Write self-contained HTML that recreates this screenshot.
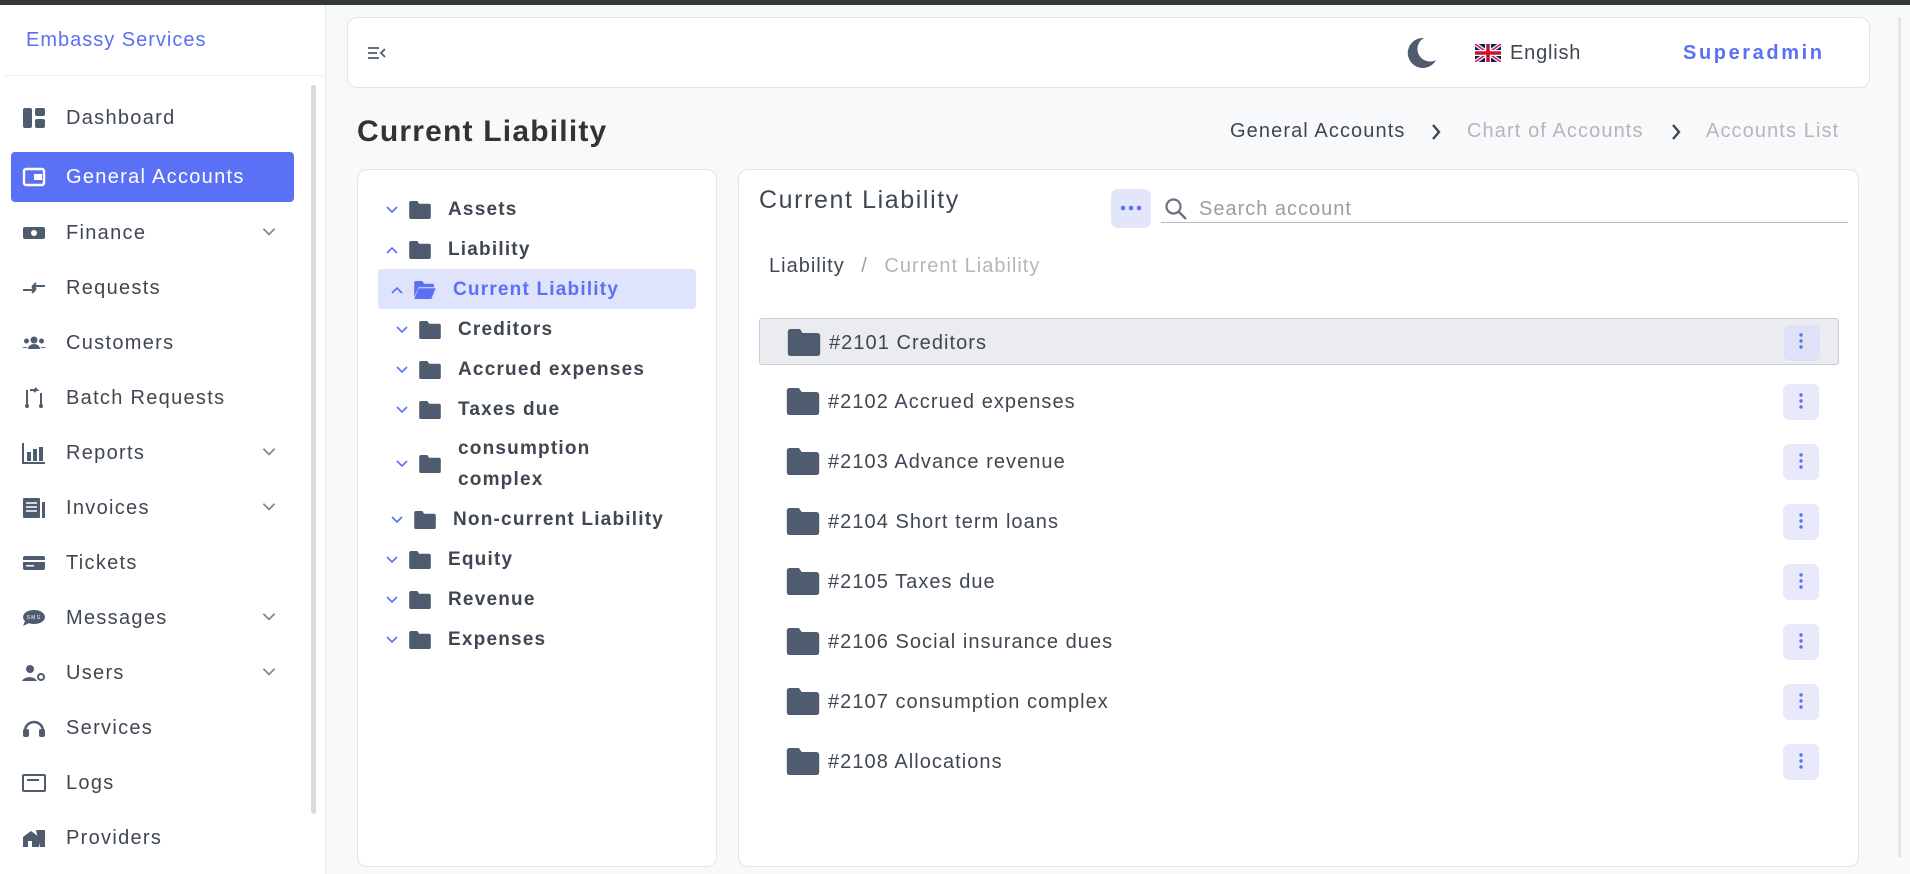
<!DOCTYPE html>
<html><head><meta charset="utf-8"><style>
*{margin:0;padding:0;box-sizing:border-box}
body{width:1910px;height:874px;overflow:hidden;background:#f8f9fb;font-family:"Liberation Sans",sans-serif;color:#3f4752;position:relative}
.a{position:absolute}
.topbar{left:0;top:0;width:1910px;height:5px;background:#333a33}
.side{left:0;top:5px;width:326px;height:869px;background:#fff;border-right:1px solid #e6e8ec}
.mi{position:absolute;left:0;width:300px;height:50px;display:flex;align-items:center;font-size:20px;color:#3f4752;letter-spacing:1.3px}
.mi .ic{position:absolute;left:22px;top:50%;transform:translateY(-50%);width:24px;height:22px}
.mi .t{position:absolute;left:66px}
.mi .ch{position:absolute;left:262px;top:50%;transform:translateY(-60%)}
.card{background:#fff;border:1px solid #e2e4e8;border-radius:10px}
.tr{position:absolute;display:flex;align-items:center;font-size:19px;font-weight:bold;color:#3f4752;height:36px;letter-spacing:1.2px}
.row{position:absolute;left:759px;width:1080px;height:47px}
.row .f{position:absolute;left:27px;top:10px}
.row .t{position:absolute;left:69px;top:13px;font-size:20px;color:#3f4752;letter-spacing:1.05px}
.row .k{position:absolute;left:1024px;top:6px;width:36px;height:36px;background:#e8eafc;border-radius:6px}
</style></head><body>
<div class="a topbar"></div>
<div class="a side">
 <div class="a" style="left:26px;top:24px;font-size:20px;color:#5b6ef5;letter-spacing:1px">Embassy Services</div>
 <div class="a" style="left:4px;top:70px;width:320px;height:1px;background:#eceef1"></div>
 <div class="a" style="left:311px;top:80px;width:5px;height:729px;background:#d6dbdc;border-radius:3px"></div>
</div>
<svg width="0" height="0" style="position:absolute"><defs>
<symbol id="fold" viewBox="0 0 24 20"><path d="M0 2a2 2 0 0 1 2-2h7l2 3h11a2 2 0 0 1 2 2v13a2 2 0 0 1-2 2H2a2 2 0 0 1-2-2z" fill="#4f5b6e"/></symbol>
<symbol id="chd" viewBox="0 0 12 8"><path d="M1 1l5 5 5-5" stroke="currentColor" stroke-width="1.6" fill="none"/></symbol>
</defs></svg>
<!-- menu -->
<div class="mi" style="top:93px"><svg class="ic" viewBox="0 0 24 22"><rect x="1" y="1" width="9" height="20" rx="2" fill="#4f5b6e"/><rect x="13" y="1" width="10" height="8" rx="2" fill="#4f5b6e"/><rect x="13" y="12" width="10" height="9" rx="2" fill="#4f5b6e"/></svg><span class="t">Dashboard</span></div>
<div class="a" style="left:11px;top:152px;width:283px;height:50px;background:#5a71f5;border-radius:4px"></div>
<div class="mi" style="top:152px;color:#fff"><svg class="ic" viewBox="0 0 24 22"><rect x="2" y="3" width="20" height="16" rx="2" stroke="#fff" stroke-width="2.4" fill="none"/><rect x="12" y="8" width="8" height="6" fill="#fff"/></svg><span class="t">General Accounts</span></div>
<div class="mi" style="top:208px"><svg class="ic" viewBox="0 0 24 22"><rect x="1" y="5" width="22" height="12" rx="2" fill="#4f5b6e"/><circle cx="12" cy="11" r="3" fill="#fff"/></svg><span class="t">Finance</span><svg class="ch" width="14" height="9" style="color:#888"><use href="#chd"/></svg></div>
<div class="mi" style="top:263px"><svg class="ic" viewBox="0 0 24 22"><path d="M1 13h12M10 10l3 3-3 3M23 9H11M14 6l-3 3 3 3" stroke="#4f5b6e" stroke-width="2" fill="none"/></svg><span class="t">Requests</span></div>
<div class="mi" style="top:318px"><svg class="ic" viewBox="0 0 24 22"><circle cx="12" cy="8" r="3.5" fill="#4f5b6e"/><circle cx="4.5" cy="9" r="2.5" fill="#4f5b6e"/><circle cx="19.5" cy="9" r="2.5" fill="#4f5b6e"/><path d="M6 17a6 5 0 0 1 12 0z M0 16a4 3 0 0 1 6 0z M18 16a4 3 0 0 1 6 0z" fill="#4f5b6e"/></svg><span class="t">Customers</span></div>
<div class="mi" style="top:373px"><svg class="ic" viewBox="0 0 24 22"><path d="M5 3v16M19 6v13M8 3h7l-2-2M14 3l-2 2" stroke="#4f5b6e" stroke-width="2" fill="none"/><circle cx="5" cy="19" r="2" fill="#4f5b6e"/><circle cx="19" cy="19" r="2" fill="#4f5b6e"/></svg><span class="t">Batch Requests</span></div>
<div class="mi" style="top:428px"><svg class="ic" viewBox="0 0 24 22"><path d="M1 1v20h22" stroke="#4f5b6e" stroke-width="2" fill="none"/><rect x="5" y="10" width="4" height="9" fill="#4f5b6e"/><rect x="11" y="7" width="4" height="12" fill="#4f5b6e"/><rect x="17" y="5" width="4" height="14" fill="#4f5b6e"/></svg><span class="t">Reports</span><svg class="ch" width="14" height="9" style="color:#888"><use href="#chd"/></svg></div>
<div class="mi" style="top:483px"><svg class="ic" viewBox="0 0 24 22"><rect x="1" y="1" width="17" height="20" rx="1" fill="#4f5b6e"/><rect x="20" y="5" width="3" height="16" fill="#4f5b6e"/><path d="M4 6h11M4 10h11M4 14h11" stroke="#fff" stroke-width="1.5"/></svg><span class="t">Invoices</span><svg class="ch" width="14" height="9" style="color:#888"><use href="#chd"/></svg></div>
<div class="mi" style="top:538px"><svg class="ic" viewBox="0 0 24 22"><rect x="1" y="4" width="22" height="14" rx="2" fill="#4f5b6e"/><rect x="1" y="8" width="22" height="2" fill="#fff"/><rect x="4" y="13" width="8" height="1.5" fill="#fff"/></svg><span class="t">Tickets</span></div>
<div class="mi" style="top:593px"><svg class="ic" viewBox="0 0 24 22"><ellipse cx="12" cy="10" rx="11" ry="7" fill="#4f5b6e"/><path d="M3 14l-2 5 6-3z" fill="#4f5b6e"/><text x="12" y="12" font-size="5" fill="#fff" text-anchor="middle" font-family="Liberation Sans">SMS</text></svg><span class="t">Messages</span><svg class="ch" width="14" height="9" style="color:#888"><use href="#chd"/></svg></div>
<div class="mi" style="top:648px"><svg class="ic" viewBox="0 0 24 22"><circle cx="8" cy="7" r="4" fill="#4f5b6e"/><path d="M0 19a8 6 0 0 1 15 0z" fill="#4f5b6e"/><circle cx="19" cy="15" r="3" stroke="#4f5b6e" stroke-width="2" fill="none"/></svg><span class="t">Users</span><svg class="ch" width="14" height="9" style="color:#888"><use href="#chd"/></svg></div>
<div class="mi" style="top:703px"><svg class="ic" viewBox="0 0 24 22"><path d="M3 14a9 9 0 0 1 18 0" stroke="#4f5b6e" stroke-width="2.5" fill="none"/><rect x="1" y="12" width="6" height="8" rx="2" fill="#4f5b6e"/><rect x="17" y="12" width="6" height="8" rx="2" fill="#4f5b6e"/></svg><span class="t">Services</span></div>
<div class="mi" style="top:758px"><svg class="ic" viewBox="0 0 24 22"><rect x="1" y="3" width="22" height="16" rx="1" stroke="#4f5b6e" stroke-width="2" fill="none"/><path d="M5 8h12" stroke="#4f5b6e" stroke-width="2"/></svg><span class="t">Logs</span></div>
<div class="mi" style="top:813px"><svg class="ic" viewBox="0 0 24 22"><path d="M1 10l8-6 8 6v10H1z M14 3h9v17h-5z" fill="#4f5b6e"/><rect x="6" y="14" width="4" height="6" fill="#fff"/></svg><span class="t">Providers</span></div>

<!-- header -->
<div class="a card" style="left:347px;top:17px;width:1523px;height:71px"></div>
<svg class="a" style="left:367px;top:46px" width="20" height="14" viewBox="0 0 20 14"><path d="M1 2h11M1 7h9M1 12h11M18 3l-4 4 4 4" stroke="#4f5b6e" stroke-width="1.8" fill="none"/></svg>
<svg class="a" style="left:1404px;top:36px" width="34" height="34" viewBox="0 0 34 34"><path d="M20 2A15 15 0 1 0 32 24 12 12 0 0 1 20 2z" fill="#4f5b6e"/></svg>
<svg class="a" style="left:1475px;top:44px" width="26" height="18" viewBox="0 0 26 18"><rect width="26" height="18" fill="#012169"/><path d="M0 0l26 18M26 0L0 18" stroke="#fff" stroke-width="4"/><path d="M0 0l26 18M26 0L0 18" stroke="#c8102e" stroke-width="1.5"/><path d="M13 0v18M0 9h26" stroke="#fff" stroke-width="6"/><path d="M13 0v18M0 9h26" stroke="#c8102e" stroke-width="3.5"/></svg>
<div class="a" style="left:1510px;top:42px;font-size:20px;color:#3f4752;letter-spacing:0.8px">English</div>
<div class="a" style="left:1683px;top:42px;font-size:20px;font-weight:bold;color:#5a71f5;letter-spacing:2.6px">Superadmin</div>
<div class="a" style="left:1898px;top:17px;width:3px;height:840px;background:#e4e6e9"></div>

<div class="a" style="left:357px;top:115px;font-size:30px;font-weight:bold;color:#333;letter-spacing:1.2px">Current Liability</div>
<div class="a" style="left:1230px;top:120px;font-size:20px;color:#3f4752;white-space:nowrap;letter-spacing:1.1px">General Accounts</div>
<svg class="a" style="left:1430px;top:123px" width="12" height="18" viewBox="0 0 12 18"><path d="M3 2l6 7-6 7" stroke="#3f4752" stroke-width="2.4" fill="none"/></svg>
<div class="a" style="left:1467px;top:120px;font-size:20px;color:#b3b6bb;white-space:nowrap;letter-spacing:1.1px">Chart of Accounts</div>
<svg class="a" style="left:1670px;top:123px" width="12" height="18" viewBox="0 0 12 18"><path d="M3 2l6 7-6 7" stroke="#3f4752" stroke-width="2.4" fill="none"/></svg>
<div class="a" style="left:1706px;top:120px;font-size:20px;color:#b3b6bb;white-space:nowrap;letter-spacing:1.1px">Accounts List</div>

<!-- tree card -->
<div class="a card" style="left:357px;top:169px;width:360px;height:698px"></div>
<div class="a" style="left:378px;top:269px;width:318px;height:40px;background:#dfe3fb;border-radius:4px"></div>
<div class="tr" style="left:386px;top:192px"><svg width="12" height="8" style="color:#5a71f5"><use href="#chd"/></svg><svg width="22" height="18" style="margin-left:11px"><use href="#fold"/></svg><span style="margin-left:17px">Assets</span></div>
<div class="tr" style="left:386px;top:232px"><svg width="12" height="8" style="color:#5a71f5;transform:rotate(180deg)"><use href="#chd"/></svg><svg width="22" height="18" style="margin-left:11px"><use href="#fold"/></svg><span style="margin-left:17px">Liability</span></div>
<div class="tr" style="left:391px;top:272px;color:#5a71f5"><svg width="12" height="8" style="color:#5a71f5;transform:rotate(180deg)"><use href="#chd"/></svg><svg width="22" height="18" style="margin-left:11px" viewBox="0 0 24 20"><path d="M0 2a2 2 0 0 1 2-2h7l2 3h9a2 2 0 0 1 2 2v2H5L0 18z M5 8h19l-5 12H0z" fill="#5a71f5"/></svg><span style="margin-left:17px">Current Liability</span></div>
<div class="tr" style="left:396px;top:312px"><svg width="12" height="8" style="color:#5a71f5"><use href="#chd"/></svg><svg width="22" height="18" style="margin-left:11px"><use href="#fold"/></svg><span style="margin-left:17px">Creditors</span></div>
<div class="tr" style="left:396px;top:352px"><svg width="12" height="8" style="color:#5a71f5"><use href="#chd"/></svg><svg width="22" height="18" style="margin-left:11px"><use href="#fold"/></svg><span style="margin-left:17px">Accrued expenses</span></div>
<div class="tr" style="left:396px;top:392px"><svg width="12" height="8" style="color:#5a71f5"><use href="#chd"/></svg><svg width="22" height="18" style="margin-left:11px"><use href="#fold"/></svg><span style="margin-left:17px">Taxes due</span></div>
<div class="tr" style="left:396px;top:432px;height:64px"><svg width="12" height="8" style="color:#5a71f5"><use href="#chd"/></svg><svg width="22" height="18" style="margin-left:11px"><use href="#fold"/></svg><span style="margin-left:17px;line-height:31px">consumption<br>complex</span></div>
<div class="tr" style="left:391px;top:502px"><svg width="12" height="8" style="color:#5a71f5"><use href="#chd"/></svg><svg width="22" height="18" style="margin-left:11px"><use href="#fold"/></svg><span style="margin-left:17px">Non-current Liability</span></div>
<div class="tr" style="left:386px;top:542px"><svg width="12" height="8" style="color:#5a71f5"><use href="#chd"/></svg><svg width="22" height="18" style="margin-left:11px"><use href="#fold"/></svg><span style="margin-left:17px">Equity</span></div>
<div class="tr" style="left:386px;top:582px"><svg width="12" height="8" style="color:#5a71f5"><use href="#chd"/></svg><svg width="22" height="18" style="margin-left:11px"><use href="#fold"/></svg><span style="margin-left:17px">Revenue</span></div>
<div class="tr" style="left:386px;top:622px"><svg width="12" height="8" style="color:#5a71f5"><use href="#chd"/></svg><svg width="22" height="18" style="margin-left:11px"><use href="#fold"/></svg><span style="margin-left:17px">Expenses</span></div>

<!-- right card -->
<div class="a card" style="left:738px;top:169px;width:1121px;height:698px"></div>
<div class="a" style="left:759px;top:186px;font-size:25px;color:#3f4752;letter-spacing:1.6px">Current Liability</div>
<div class="a" style="left:1111px;top:189px;width:40px;height:39px;background:#e3e6fb;border-radius:7px"></div>
<svg class="a" style="left:1120px;top:205px" width="22" height="6"><circle cx="3" cy="3" r="2.3" fill="#5a71f5"/><circle cx="11" cy="3" r="2.3" fill="#5a71f5"/><circle cx="19" cy="3" r="2.3" fill="#5a71f5"/></svg>
<svg class="a" style="left:1164px;top:197px" width="24" height="24" viewBox="0 0 24 24"><circle cx="9.5" cy="9.5" r="7" stroke="#6b7280" stroke-width="2.2" fill="none"/><path d="M15 15l7 7" stroke="#6b7280" stroke-width="2.4"/></svg>
<div class="a" style="left:1199px;top:198px;font-size:20px;color:#9a9ea5;letter-spacing:1px">Search account</div>
<div class="a" style="left:1161px;top:222px;width:687px;height:1px;background:#b8bbc0"></div>
<div class="a" style="left:769px;top:255px;font-size:20px;color:#3f4752;letter-spacing:1px">Liability <span style="margin:0 10px;color:#9a9ea5">/</span> <span style="color:#b3b6bb">Current Liability</span></div>

<div class="row" style="top:318px;background:#ebecf0;border:1px solid #c9ccd2;border-radius:3px"><svg class="f" width="34" height="27"><use href="#fold"/></svg><span class="t">#2101 Creditors</span><div class="k" style="background:#dfe2f7"></div></div>
<div class="row" style="top:378px"><svg class="f" width="34" height="27"><use href="#fold"/></svg><span class="t">#2102 Accrued expenses</span><div class="k"></div></div>
<div class="row" style="top:438px"><svg class="f" width="34" height="27"><use href="#fold"/></svg><span class="t">#2103 Advance revenue</span><div class="k"></div></div>
<div class="row" style="top:498px"><svg class="f" width="34" height="27"><use href="#fold"/></svg><span class="t">#2104 Short term loans</span><div class="k"></div></div>
<div class="row" style="top:558px"><svg class="f" width="34" height="27"><use href="#fold"/></svg><span class="t">#2105 Taxes due</span><div class="k"></div></div>
<div class="row" style="top:618px"><svg class="f" width="34" height="27"><use href="#fold"/></svg><span class="t">#2106 Social insurance dues</span><div class="k"></div></div>
<div class="row" style="top:678px"><svg class="f" width="34" height="27"><use href="#fold"/></svg><span class="t">#2107 consumption complex</span><div class="k"></div></div>
<div class="row" style="top:738px"><svg class="f" width="34" height="27"><use href="#fold"/></svg><span class="t">#2108 Allocations</span><div class="k"></div></div>
<svg class="a" style="left:1799px;top:332px" width="4" height="440">
<g fill="#5a71f5">
<circle cx="2" cy="3" r="1.7"/><circle cx="2" cy="9" r="1.7"/><circle cx="2" cy="15" r="1.7"/>
<circle cx="2" cy="63" r="1.7"/><circle cx="2" cy="69" r="1.7"/><circle cx="2" cy="75" r="1.7"/>
<circle cx="2" cy="123" r="1.7"/><circle cx="2" cy="129" r="1.7"/><circle cx="2" cy="135" r="1.7"/>
<circle cx="2" cy="183" r="1.7"/><circle cx="2" cy="189" r="1.7"/><circle cx="2" cy="195" r="1.7"/>
<circle cx="2" cy="243" r="1.7"/><circle cx="2" cy="249" r="1.7"/><circle cx="2" cy="255" r="1.7"/>
<circle cx="2" cy="303" r="1.7"/><circle cx="2" cy="309" r="1.7"/><circle cx="2" cy="315" r="1.7"/>
<circle cx="2" cy="363" r="1.7"/><circle cx="2" cy="369" r="1.7"/><circle cx="2" cy="375" r="1.7"/>
<circle cx="2" cy="423" r="1.7"/><circle cx="2" cy="429" r="1.7"/><circle cx="2" cy="435" r="1.7"/>
</g></svg>
</body></html>
